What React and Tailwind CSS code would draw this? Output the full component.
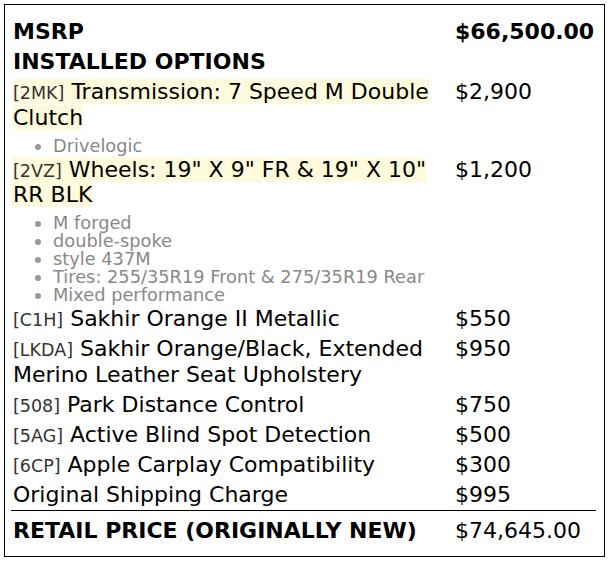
const rows = [
  {
    code: "2MK",
    name: "Transmission: 7 Speed M Double Clutch",
    price: "$2,900",
    hl: true,
    notes: ["Drivelogic"],
  },
  {
    code: "2VZ",
    name: 'Wheels: 19" X 9" FR & 19" X 10" RR BLK',
    price: "$1,200",
    hl: true,
    notes: [
      "M forged",
      "double-spoke",
      "style 437M",
      "Tires: 255/35R19 Front & 275/35R19 Rear",
      "Mixed performance",
    ],
  },
  { code: "C1H", name: "Sakhir Orange II Metallic", price: "$550" },
  {
    code: "LKDA",
    name: "Sakhir Orange/Black, Extended Merino Leather Seat Upholstery",
    price: "$950",
  },
  { code: "508", name: "Park Distance Control", price: "$750" },
  { code: "5AG", name: "Active Blind Spot Detection", price: "$500" },
  { code: "6CP", name: "Apple Carplay Compatibility", price: "$300" },
  { code: null, name: "Original Shipping Charge", price: "$995" },
];

const App = () => {
  return (
    <div
      className="w-[609px] h-[569px] bg-white text-black p-[4px]"
      style={{ fontFamily: '"DejaVu Sans", Verdana, sans-serif' }}
    >
      <div className="w-[601px] h-[553px] border border-black pl-[6px] pt-[12px]">
        <div className="w-[580px] grid grid-cols-[442px_1fr] text-[22px] leading-[25.5px]">
          {/* MSRP */}
          <div className="px-[2px] py-[2px] font-bold">MSRP</div>
          <div className="px-[2px] py-[2px] font-bold">$66,500.00</div>
          <div className="px-[2px] pt-[2px] pb-[3px] font-bold col-span-2">
            INSTALLED OPTIONS
          </div>

          {rows.map((r) => (
            <div key={r.name} className="contents">
              <div className="px-[2px] py-[2.25px]">
                <span className={r.hl ? "bg-[#fefbdc]" : ""}>
                  {r.code && (
                    <span className="text-[17.5px] leading-none text-[#333]">
                      [{r.code}]
                    </span>
                  )}
                  {r.code && " "}
                  {r.name}
                </span>
              </div>
              <div className="px-[2px] py-[2.25px]">{r.price}</div>
              {r.notes && (
                <ul className="col-span-2 list-disc pl-[42px] pt-[4px] text-[17.8px] leading-[18px] text-[#888] marker:text-[#999]">
                  {r.notes.map((n) => (
                    <li key={n}>{n}</li>
                  ))}
                </ul>
              )}
            </div>
          ))}

          {/* total */}
          <div className="col-span-2 grid grid-cols-[442px_1fr] border-t border-black">
            <div className="px-[2px] pt-[7px] pb-[2px] font-bold">
              RETAIL PRICE (ORIGINALLY NEW)
            </div>
            <div className="px-[2px] pt-[7px] pb-[2px]">$74,645.00</div>
          </div>
        </div>
      </div>
    </div>
  );
};

export default App;
